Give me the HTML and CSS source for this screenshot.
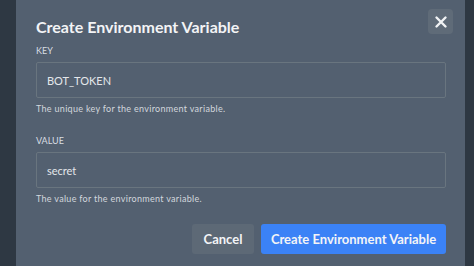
FILE: index.html
```html
<!DOCTYPE html>
<html lang="en">
<head>
    <meta charset="UTF-8">
    <meta name="viewport" content="width=device-width, initial-scale=1.0">
    <title>Create Environment Variable</title>
    <link rel="stylesheet" href="styles.css">
</head>
<body>

    <div class="backdrop">
        <div class="modal">
            <!-- Header -->
            <div class="modal-header">
                <h2>Create Environment Variable</h2>
                <button class="close-btn" aria-label="Close">
                    <svg width="14" height="14" viewBox="0 0 14 14">
                        <path d="M2.5 2.5 L11.5 11.5 M11.5 2.5 L2.5 11.5" stroke="#f1f3f5" stroke-width="2.4" stroke-linecap="round"/>
                    </svg>
                </button>
            </div>

            <!-- Fields -->
            <div class="field first">
                <label>KEY</label>
                <div class="input">BOT_TOKEN</div>
                <p class="hint">The unique key for the environment variable.</p>
            </div>

            <div class="field">
                <label>VALUE</label>
                <div class="input">secret</div>
                <p class="hint">The value for the environment variable.</p>
            </div>

            <!-- Actions -->
            <div class="actions">
                <button class="btn btn-cancel">Cancel</button>
                <button class="btn btn-primary">Create Environment Variable</button>
            </div>
        </div>
    </div>

</body>
</html>
```

FILE: styles.css
```css
/* General Styles */
body {
    margin: 0;
    padding: 0;
    font-family: Lato, "Noto Sans", sans-serif;
    background-color: #2e3843;
    overflow: hidden;
}

.backdrop {
    display: flex;
    height: 266px;
    padding-left: 16px;
}

.modal {
    width: 449px;
    background-color: #536070;
    padding: 9px 19px 0 20px;
    box-sizing: border-box;
}

/* Header */
.modal-header {
    display: flex;
    justify-content: space-between;
    align-items: flex-start;
}

.modal-header h2 {
    margin: 8px 0 0;
    font-size: 16px;
    font-weight: 700;
    color: #f3f4f6;
}

.close-btn {
    width: 25px;
    height: 25px;
    margin-right: -7px;
    border: none;
    border-radius: 4px;
    background-color: #5f6b78;
    display: flex;
    align-items: center;
    justify-content: center;
    padding: 0;
}

/* Fields */
.field {
    display: flex;
    flex-direction: column;
}

.field.first {
    margin-top: 5px;
}

.field label {
    font-size: 9px;
    color: #d8dde3;
    margin-top: 4px;
}

.input {
    margin-top: 6px;
    height: 36px;
    box-sizing: border-box;
    border: 1px solid #69757f;
    border-radius: 2px;
    padding: 0 10px;
    display: flex;
    align-items: center;
    font-size: 11px;
    color: #e4e7eb;
}

.hint {
    margin: 5px 0 17px;
    font-size: 9px;
    letter-spacing: 0.3px;
    color: #d2d7dd;
}

/* Actions */
.actions {
    display: flex;
    justify-content: flex-end;
    gap: 7px;
    margin-top: 3px;
}

.btn {
    height: 30px;
    border: none;
    border-radius: 3px;
    font-family: inherit;
    font-size: 13px;
    font-weight: 700;
    color: #f3f4f6;
    padding: 0;
    white-space: nowrap;
}

.btn-cancel {
    width: 62px;
    background-color: #5d6976;
}

.btn-primary {
    width: 185px;
    background-color: #3b82f6;
}
```
